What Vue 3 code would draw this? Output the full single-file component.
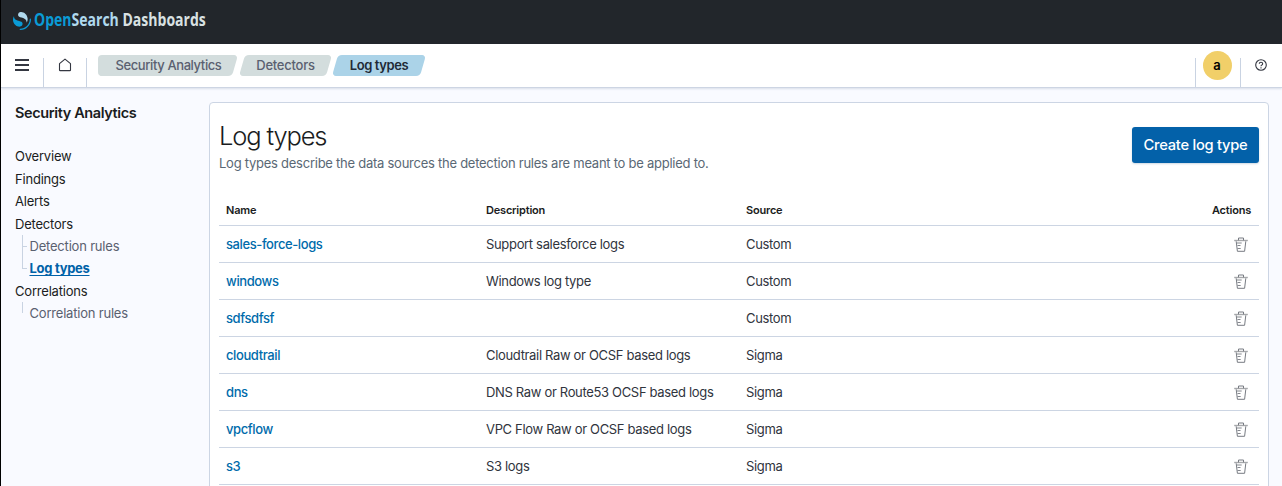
<script setup>
const crumbs = [
  { label: 'Security Analytics', cls: 'first' },
  { label: 'Detectors', cls: 'second' },
  { label: 'Log types', cls: 'current' },
]

const nav = [
  { label: 'Overview' },
  { label: 'Findings' },
  { label: 'Alerts' },
  { label: 'Detectors', children: [{ label: 'Detection rules' }, { label: 'Log types', active: true }] },
  { label: 'Correlations', children: [{ label: 'Correlation rules' }] },
]

const rows = [
  { name: 'sales-force-logs', description: 'Support salesforce logs', source: 'Custom' },
  { name: 'windows', description: 'Windows log type', source: 'Custom' },
  { name: 'sdfsdfsf', description: '', source: 'Custom' },
  { name: 'cloudtrail', description: 'Cloudtrail Raw or OCSF based logs', source: 'Sigma' },
  { name: 'dns', description: 'DNS Raw or Route53 OCSF based logs', source: 'Sigma' },
  { name: 'vpcflow', description: 'VPC Flow Raw or OCSF based logs', source: 'Sigma' },
  { name: 's3', description: 'S3 logs', source: 'Sigma' },
]
</script>

<template>
  <div class="app">
    <header class="brand">
      <svg class="logo" width="18" height="18" viewBox="0 0 64 64">
        <path fill="#0a9bd6" d="M61.700 23.500a2.260 2.260 0 0 0-2.260 2.260C59.470 44.380 44.380 59.470 25.760 59.470a2.260 2.260 0 0 0 0 4.530C46.880 64 64 46.880 64 25.760a2.260 2.260 0 0 0-2.300-2.260Z" />
        <path fill="#b0d9ee" d="M48.080 38c2.180-3.550 4.280-8.280 3.870-14.910C51.090 9.370 38.660-1.040 26.920.08c-4.600.45-9.310 4.190-8.890 10.900.18 2.920 1.610 4.640 3.920 5.960 2.210 1.260 5.050 2.060 8.260 2.960 3.890 1.090 8.390 2.320 11.850 4.870C46.210 27.830 49.050 31.370 48.080 38Z" />
        <path fill="#0a9bd6" d="M3.920 14C1.740 17.550-.36 22.280.05 28.910.91 42.630 13.340 53.040 25.080 51.920c4.590-.45 9.310-4.190 8.890-10.900-.18-2.920-1.610-4.640-3.920-5.960-2.210-1.260-5.050-2.060-8.260-2.960-3.890-1.090-8.390-2.320-11.850-4.870C5.790 24.170 2.950 20.630 3.920 14Z" />
      </svg>
      <div class="wordmark"><span class="open">Open</span><span class="search">Search</span> <span>Dashboards</span></div>
    </header>

    <div class="toolbar">
      <button class="tool menu" aria-label="Menu">
        <svg width="14" height="12" viewBox="0 0 14 12"><path d="M0 1h14M0 6h14M0 11h14" stroke="#343741" stroke-width="1.800" /></svg>
      </button>
      <button class="tool home" aria-label="Home">
        <svg width="14" height="14" viewBox="0 0 14 14"><path d="M1.500 5.700 7 1.100l5.500 4.600v6.200q0 .7-.7.700H2.200q-.7 0-.7-.7z" fill="none" stroke="#343741" stroke-width="1.100" stroke-linejoin="round" /></svg>
      </button>
      <nav class="crumbs">
        <span v-for="c in crumbs" :key="c.label" class="crumb" :class="c.cls">{{ c.label }}</span>
      </nav>
      <div class="account"><span class="avatar">a</span></div>
      <button class="tool help" aria-label="Help">
        <svg width="12" height="12" viewBox="0 0 12 12" fill="none" stroke="#343741">
          <circle cx="6" cy="6" r="5.300" stroke-width="1.100" />
          <path d="M4.300 4.800Q4.300 3.200 6 3.200t1.700 1.500Q7.700 5.500 6.800 6 6 6.400 6 7.300M6 8.300v1.100" stroke-width="1.100" />
        </svg>
      </button>
    </div>

    <div class="body">
      <aside class="side">
        <h2>Security Analytics</h2>
        <ul class="nav">
          <li v-for="n in nav" :key="n.label">
            <a class="item">{{ n.label }}</a>
            <ul v-if="n.children" class="sub">
              <li v-for="s in n.children" :key="s.label">
                <a class="item" :class="{ active: s.active }">{{ s.label }}</a>
              </li>
            </ul>
          </li>
        </ul>
      </aside>

      <main class="panel">
        <div class="head">
          <div>
            <h1>Log types</h1>
            <p>Log types describe the data sources the detection rules are meant to be applied to.</p>
          </div>
          <button class="create">Create log type</button>
        </div>
        <div class="table">
          <div class="row th"><span>Name</span><span>Description</span><span>Source</span><span class="end">Actions</span></div>
          <div v-for="r in rows" :key="r.name" class="row">
            <a>{{ r.name }}</a>
            <span>{{ r.description }}</span>
            <span>{{ r.source }}</span>
            <span class="end trash">
              <svg width="14" height="15" viewBox="0 0 14 15" fill="none" stroke="#777b82">
                <path d="M.2 3.500h13.600" stroke="#a6a8ab" stroke-width="1.400" />
                <path d="M4.500 3.300V1h5v2.300M2.200 4.300l1.200 10h7.200l1.200-10" />
                <path d="M3 6h4.700M3.500 8.500h3M3.500 11.500h3.200" stroke-width=".9" />
              </svg>
            </span>
          </div>
        </div>
      </main>
    </div>
  </div>
</template>

<style>
body { margin: 0; overflow: hidden; }
</style>

<style scoped>
* { box-sizing: border-box; }
.app {
  height: 486px;
  overflow: hidden;
  display: flex;
  flex-direction: column;
  border-left: 1px solid #000;
  background: #f9faff;
  font-family: Inter, "Liberation Sans", sans-serif;
  font-size: 13px;
  letter-spacing: -.2px;
  color: #1a1c21;
}
h1, h2, p, ul { margin: 0; padding: 0; }
ul { list-style: none; }
button { border: 0; background: none; padding: 0; font: inherit; letter-spacing: inherit; }
svg { display: block; flex: none; }

.brand { height: 44px; flex: none; display: flex; background: #22262b; padding: 12px 0 0 12px; }
.wordmark {
  margin: -5px 0 0 3px;
  height: 24px;
  font: 700 18.500px/24px "Open Sans", "Noto Sans", sans-serif;
  letter-spacing: 0;
  white-space: nowrap;
  color: #d9e1e2;
  transform: scaleX(.758);
  transform-origin: left;
}
.open { color: #0a9bd6; }
.search { color: #b0d9ee; }

.toolbar {
  position: relative;
  height: 44px;
  flex: none;
  display: flex;
  align-items: flex-end;
  background: #fff;
  border-bottom: 1px solid #cdd5e3;
  box-shadow: 0 1px 2px rgba(90, 110, 140, .2);
}
.tool, .account { height: 29px; border-right: 1px solid #c9d3e2; display: flex; justify-content: center; }
.menu { width: 43px; padding-top: 1px; }
.home { width: 43px; }
.crumbs { display: flex; flex: 1; height: 32px; padding-left: 11px; }
.crumb {
  position: relative;
  z-index: 0;
  height: 21px;
  line-height: 21px;
  text-align: center;
  color: #5a6070;
  font-weight: 500;
  letter-spacing: -.4px;
}
.crumb::before {
  content: "";
  position: absolute;
  z-index: -1;
  inset: 0 3px;
  border-radius: 4px;
  background: #d3dddd;
  transform: skewX(-16deg);
}
.first { width: 140px; margin-right: 1px; padding-left: 1px; }
.first::after {
  content: "";
  position: absolute;
  z-index: -1;
  inset: 0 20px 0 0;
  border-radius: 4px;
  background: #d3dddd;
}
.second { width: 93px; letter-spacing: -.25px; }
.current { width: 94px; color: #1f2a36; font-weight: 600; }
.current::before { background: #abd3e8; }
.account { width: 46px; border-left: 1px solid #c9d3e2; }
.avatar {
  width: 29px;
  height: 29px;
  margin: -7px 2px 0 0;
  border-radius: 50%;
  background: #f1cf69;
  color: #000;
  font-weight: 600;
  text-align: center;
  line-height: 29px;
}
.help { width: 41px; border: 0; padding: 1px 1px 0 0; }

.body { display: flex; flex: 1; min-height: 0; }
.side { width: 208px; flex: none; padding: 15px 0 0 14px; }
h2 { font-size: 14.500px; line-height: 20px; font-weight: 600; letter-spacing: -.39px; }
.nav { margin-top: 22.200px; }
.item { display: block; height: 22.450px; line-height: 22.450px; }
.sub .item { color: #5a6070; }
.sub .active { color: #0062a8; font-weight: 700; text-decoration: underline; text-underline-offset: 2px; letter-spacing: -.3px; }
.sub { margin-left: 7px; }
.sub li { position: relative; padding-left: 7.500px; }
.sub li::before {
  content: "";
  position: absolute;
  left: 0;
  top: 0;
  width: 4px;
  height: 11px;
  border-left: 1px solid #c9d3e2;
  border-bottom: 1px solid #c9d3e2;
}
.sub li:not(:last-child)::after {
  content: "";
  position: absolute;
  left: 0;
  top: 0;
  height: 100%;
  border-left: 1px solid #c9d3e2;
}
.sub li:only-child::before { border-bottom: 0; }

.panel {
  width: 1060px;
  height: 420px;
  margin-top: 14px;
  padding: 0 9px;
  background: #fff;
  border: 1px solid #ccd5e4;
  border-radius: 4px;
}
.head { height: 92px; display: flex; justify-content: space-between; }
h1 { margin-top: 16px; font-size: 25.500px; line-height: 34px; font-weight: 300; letter-spacing: -1.150px; }
p { line-height: 20px; color: #5a6875; letter-spacing: -.255px; }
.create {
  width: 127px;
  height: 36px;
  margin-top: 24px;
  border-radius: 3px;
  background: #0361a9;
  color: #fff;
  font-size: 14.700px;
  font-weight: 500;
  letter-spacing: -.25px;
  box-shadow: 0 1px 2px rgba(0, 60, 110, .2);
}
.row {
  height: 37px;
  display: grid;
  grid-template-columns: 260px 260px 1fr 80px;
  align-items: center;
  padding: 0 8px 0 7px;
  border-bottom: 1px solid #ccd5e3;
  color: #30343d;
  letter-spacing: -.33px;
}
.th { height: 31px; font-size: 11px; font-weight: 600; color: #1a1c21; letter-spacing: -.2px; }
.row a { color: #006bab; font-weight: 500; letter-spacing: -.4px; }
.end { text-align: right; }
.trash { display: flex; justify-content: flex-end; padding-right: 3px; }
</style>
